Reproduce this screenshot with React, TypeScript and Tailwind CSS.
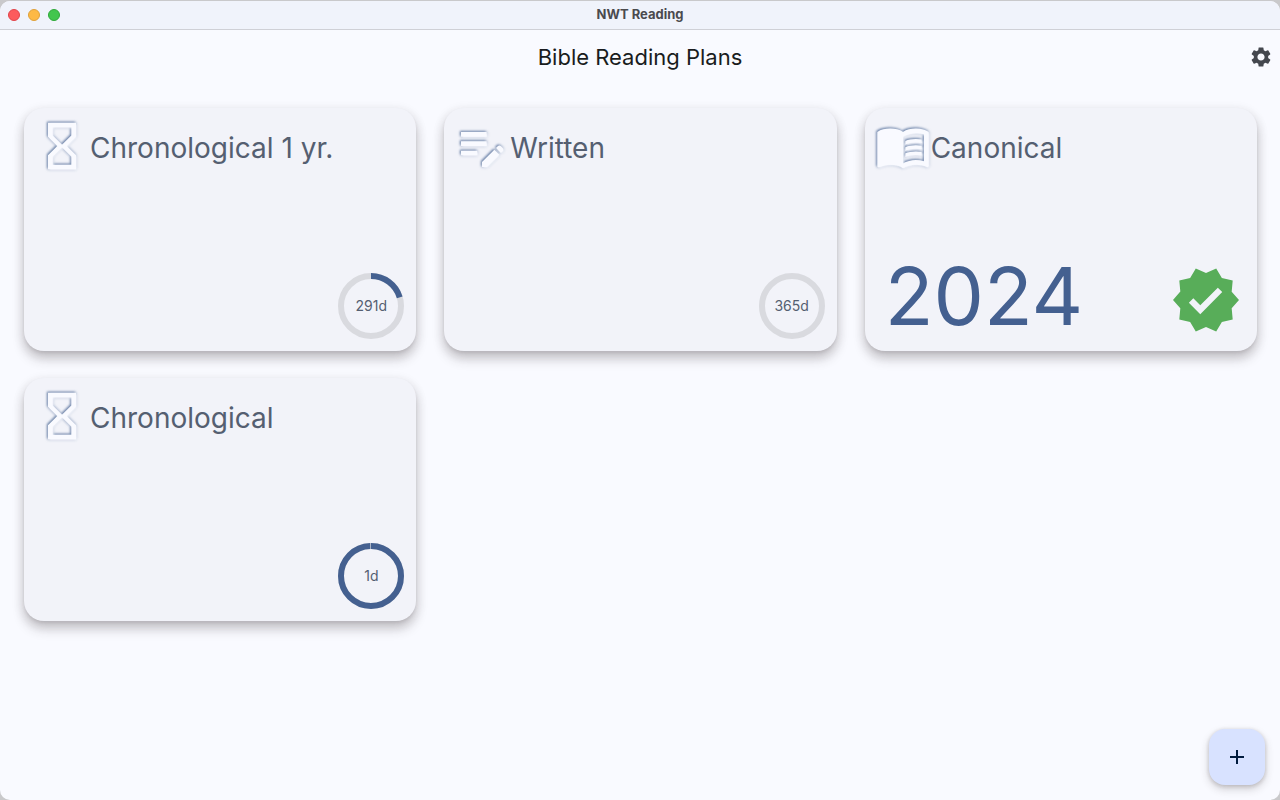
import type { ReactNode } from "react";
import {
  MdAdd,
  MdEditNote,
  MdHourglassEmpty,
  MdMenuBook,
  MdSettings,
} from "react-icons/md";

type Plan = {
  id: number;
  name: string;
  kind: "chronological" | "written" | "canonical";
  daysLeft?: number;
  finished?: string;
};

const DAYS_IN_YEAR = 365;

const plans: Plan[] = [
  { id: 1, name: "Chronological 1 yr.", kind: "chronological", daysLeft: 291 },
  { id: 2, name: "Written", kind: "written", daysLeft: 365 },
  { id: 3, name: "Canonical", kind: "canonical", finished: "2024" },
  { id: 4, name: "Chronological", kind: "chronological", daysLeft: 1 },
];

const kindIcons: Record<Plan["kind"], ReactNode> = {
  chronological: <MdHourglassEmpty className="size-full" />,
  written: <MdEditNote className="size-full" />,
  canonical: <MdMenuBook className="size-full" />,
};

function ProgressRing({ daysLeft }: { daysLeft: number }) {
  const length = 2 * Math.PI * 30;
  // An unfinished plan always keeps a visible gap in the ring.
  const done = Math.min(((DAYS_IN_YEAR - daysLeft) / DAYS_IN_YEAR) * length, length - 1);
  return (
    <div className="grid size-[66px] place-items-center">
      <svg viewBox="0 0 66 66" className="col-start-1 row-start-1 size-full" aria-hidden="true">
        <circle cx="33" cy="33" r="30" fill="none" stroke="#d9dadf" strokeWidth="6" />
        {done > 0 && (
          <circle
            cx="33"
            cy="33"
            r="30"
            fill="none"
            stroke="#446090"
            strokeWidth="6"
            strokeDasharray={`${done} ${length}`}
            transform="rotate(-90 33 33)"
          />
        )}
      </svg>
      <span className="col-start-1 row-start-1 text-sm text-[#555f71]">{daysLeft}d</span>
    </div>
  );
}

function VerifiedBadge() {
  return (
    <svg viewBox="0 0 24 24" className="size-[72px] fill-[#58ad59]" role="img" aria-label="Finished">
      <path d="M23 12l-2.44-2.79.34-3.69-3.61-.82-1.89-3.2L12 2.96 8.6 1.5 6.71 4.69 3.1 5.5l.34 3.7L1 12l2.44 2.79-.34 3.7 3.61.82L8.6 22.5l3.4-1.47 3.4 1.46 1.89-3.19 3.61-.82-.34-3.69L23 12zm-12.91 4.72l-3.8-3.81 1.48-1.48 2.32 2.33 5.85-5.87 1.48 1.48-7.33 7.35z" />
    </svg>
  );
}

function PlanCard({ plan }: { plan: Plan }) {
  return (
    <a
      href={`#plan-${plan.id}`}
      className="flex aspect-[392/243] flex-col justify-between rounded-[20px] bg-[#f2f3f9] shadow-[0_8px_12px_rgba(50,40,45,0.22),0_3px_12px_rgba(50,40,45,0.12),0_2px_3px_rgba(50,40,45,0.08)]"
    >
      <span className="flex items-center pt-2.5 pl-2.5">
        <span className="size-14 shrink-0 text-[#f9faff] drop-shadow-[-1px_-1px_1px_rgba(68,96,144,0.8)] [&>svg]:drop-shadow-[1px_1px_1px_#f9faff]">
          {kindIcons[plan.kind]}
        </span>
        <span className="pt-1 text-[28px] leading-9 text-[#555f71]">{plan.name}</span>
      </span>
      {plan.finished ? (
        <span className="flex items-end justify-between pr-[15px] pb-[15px] pl-5">
          <span className="text-[80px] leading-20 text-[#446090]">{plan.finished}</span>
          <VerifiedBadge />
        </span>
      ) : (
        <span className="flex justify-end pr-3 pb-3">
          <ProgressRing daysLeft={plan.daysLeft ?? 0} />
        </span>
      )}
    </a>
  );
}

function TitleBar() {
  return (
    <div className="grid h-[29px] shrink-0 grid-cols-[1fr_auto_1fr] items-center border-b border-[#cfd0d6] bg-[#f0f3fb] px-2">
      <div className="flex gap-2">
        <button aria-label="Close" className="size-3 rounded-full border border-[#e0444a] bg-[#fc5b5d]" />
        <button aria-label="Minimize" className="size-3 rounded-full border border-[#dea03a] bg-[#fdb945]" />
        <button aria-label="Zoom" className="size-3 rounded-full border border-[#2fa839] bg-[#42c64d]" />
      </div>
      <span className="pb-0.5 text-[13px] leading-4 font-bold text-[#4a4a4e]">NWT Reading</span>
    </div>
  );
}

export default function App() {
  return (
    <div className="flex min-h-screen flex-col bg-[#c9c9cb] pt-px font-[Inter,sans-serif]">
      <div className="flex grow flex-col overflow-hidden rounded-[10px] bg-[#f9faff]">
        <TitleBar />
        <header className="grid h-[54px] grid-cols-[1fr_auto_1fr] items-center px-[7px]">
          <h1 className="col-start-2 text-[22px] leading-7 text-[#191c20]">Bible Reading Plans</h1>
          <button aria-label="Settings" className="justify-self-end text-[#44474e]">
            <MdSettings className="size-6" />
          </button>
        </header>
        <main className="grid grid-cols-3 gap-x-7 gap-y-[27px] pt-6 pr-[23px] pb-6 pl-6">
          {plans.map((plan) => (
            <PlanCard key={plan.id} plan={plan} />
          ))}
        </main>
      </div>
      <button
        aria-label="Add plan"
        className="fixed right-[15px] bottom-[15px] grid size-14 place-items-center rounded-2xl bg-[#d8e2ff] text-[#001b3e] shadow-[0_4px_8px_rgba(60,50,50,0.22),0_1px_4px_rgba(60,50,50,0.2)]"
      >
        <MdAdd className="size-6" />
      </button>
    </div>
  );
}
